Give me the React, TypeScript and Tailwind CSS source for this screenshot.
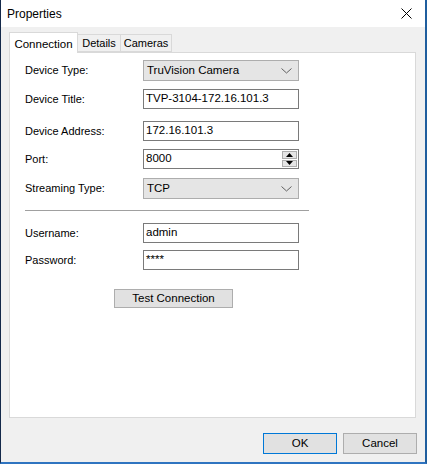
import React from 'react';

const font = { fontFamily: '"Liberation Sans", Arial, sans-serif' };

const Chevron = () => (
  <svg width="11" height="6" viewBox="0 0 11 6" className="shrink-0">
    <path d="M0.5 0.5 L5.5 5 L10.5 0.5" fill="none" stroke="#606060" strokeWidth="1" />
  </svg>
);

const Combo: React.FC<{ value: string }> = ({ value }) => (
  <div className="flex h-[21px] w-[156px] items-center justify-between border border-[#adadad] bg-[#e5e5e5] pl-[3px] pr-[6px] text-[11.5px] text-black">
    <span>{value}</span>
    <Chevron />
  </div>
);

const TextBox: React.FC<{ value: string; children?: React.ReactNode }> = ({ value, children }) => (
  <div className="flex h-[20px] w-[156px] items-center justify-between border border-[#7a7a7a] bg-white pl-[2px] text-[11.5px] text-black">
    <span>{value}</span>
    {children}
  </div>
);

const Row: React.FC<{ label: string; className: string; children: React.ReactNode }> = ({ label, className, children }) => (
  <div className={`flex items-center ${className}`}>
    <div className="w-[118px] text-[11px] text-black">{label}</div>
    {children}
  </div>
);

const Spinner = () => (
  <div className="mr-[1px] flex h-[16px] w-[15px] flex-col gap-[1px]">
    <div className="flex flex-1 items-center justify-center border border-[#adadad] bg-[#e5e5e5]">
      <svg width="7" height="4" viewBox="0 0 7 4"><path d="M0 4 L3.5 0 L7 4 Z" fill="#000" /></svg>
    </div>
    <div className="flex flex-1 items-center justify-center border border-[#adadad] bg-[#e5e5e5]">
      <svg width="7" height="4" viewBox="0 0 7 4"><path d="M0 0 L3.5 4 L7 0 Z" fill="#000" /></svg>
    </div>
  </div>
);

export default function App() {
  return (
    <div
      style={font}
      className="flex h-[464px] w-[427px] flex-col border-b-[2px] border-l-[1px] border-r-[2px] border-b-[#2f74c0] border-l-[#14294a] border-r-[#1f5e9e] bg-[#f0f0f0]"
    >
      {/* title bar */}
      <div className="flex h-[27px] items-center justify-between bg-white pl-[6px] pr-[13px]">
        <span className="text-[12px] text-black">Properties</span>
        <svg width="11" height="11" viewBox="0 0 11 11">
          <path d="M0.5 0.5 L10.5 10.5 M10.5 0.5 L0.5 10.5" stroke="#000" strokeWidth="1" />
        </svg>
      </div>

      {/* tabs */}
      <div className="ml-[8px] mt-[5px] flex h-[20px] items-end">
        <div className="relative z-10 -mb-[1px] flex h-[21px] w-[69px] items-start justify-center border border-b-0 border-[#d9d9d9] bg-white pt-[3px] text-[11.5px] text-black">
          Connection
        </div>
        <div className="flex h-[18px] w-[43px] items-center justify-center border border-l-0 border-[#d9d9d9] text-[11px] text-black">
          Details
        </div>
        <div className="flex h-[18px] w-[51px] items-center justify-center border border-l-0 border-[#d9d9d9] text-[11px] text-black">
          Cameras
        </div>
      </div>

      {/* panel */}
      <div className="ml-[8px] h-[366px] w-[407px] border border-[#d9d9d9] bg-white pl-[15px]">
        <Row label="Device Type:" className="mt-[7px]">
          <Combo value="TruVision Camera" />
        </Row>
        <Row label="Device Title:" className="mt-[8px]">
          <TextBox value="TVP-3104-172.16.101.3" />
        </Row>
        <Row label="Device Address:" className="mt-[12px]">
          <TextBox value="172.16.101.3" />
        </Row>
        <Row label="Port:" className="mt-[8px]">
          <TextBox value="8000">
            <Spinner />
          </TextBox>
        </Row>
        <Row label="Streaming Type:" className="mt-[9px]">
          <Combo value="TCP" />
        </Row>
        <div className="mt-[11px] h-[1px] w-[284px] bg-[#a0a0a0]" />
        <Row label="Username:" className="mt-[12px]">
          <TextBox value="admin" />
        </Row>
        <Row label="Password:" className="mt-[7px]">
          <TextBox value="****" />
        </Row>
        <div className="ml-[89px] mt-[19px] flex h-[19px] w-[119px] items-center justify-center border border-[#adadad] bg-[#e1e1e1] text-[11.5px] text-black">
          Test Connection
        </div>
      </div>

      {/* footer buttons */}
      <div className="ml-[262px] mt-[15px] flex gap-[6px]">
        <div className="flex h-[21px] w-[74px] items-center justify-center border border-[#0078d7] bg-[#e1e1e1] text-[11.5px] text-black">
          OK
        </div>
        <div className="flex h-[21px] w-[74px] items-center justify-center border border-[#adadad] bg-[#e1e1e1] text-[11.5px] text-black">
          Cancel
        </div>
      </div>
    </div>
  );
}
